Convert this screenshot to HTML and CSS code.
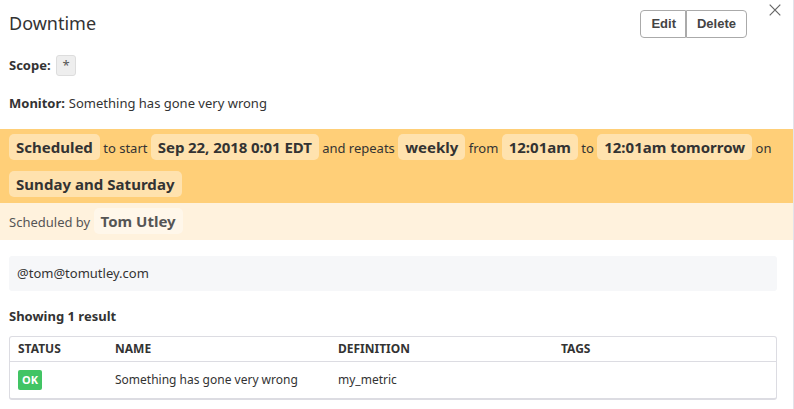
FILE: index.html
```html
<!DOCTYPE html>
<html lang="en">
<head>
<meta charset="utf-8">
<title>Downtime</title>
<link rel="stylesheet" href="styles.css">
</head>
<body>
<main class="panel">
  <header class="header">
    <h1 class="title">Downtime</h1>
    <div class="actions">
      <button class="btn">Edit</button><button class="btn">Delete</button>
    </div>
    <button class="close" aria-label="Close">
      <svg width="12" height="12" viewBox="0 0 12 12"><path d="M.7.7l10.6 10.6M11.3.7L.7 11.3" fill="none" stroke="#666" stroke-width="1.2"/></svg>
    </button>
  </header>
  <p class="scope"><b>Scope:</b> <span class="tag">*</span></p>
  <p class="monitor"><b>Monitor:</b> Something has gone very wrong</p>
  <section class="schedule"><span class="pill">Scheduled</span> to start <span class="pill date">Sep 22, 2018 0:01 EDT</span> and repeats <span class="pill">weekly</span> from <span class="pill">12:01am</span> to <span class="pill">12:01am tomorrow</span> on <span class="pill days">Sunday and Saturday</span></section>
  <section class="author">Scheduled by <span class="pill">Tom Utley</span></section>
  <div class="message">@tom@tomutley.com</div>
  <h2 class="count">Showing 1 result</h2>
  <div class="results">
    <div class="row head"><span>STATUS</span><span>NAME</span><span>DEFINITION</span><span>TAGS</span></div>
    <div class="row"><span><b class="ok">OK</b></span><span>Something has gone very wrong</span><span>my_metric</span><span></span></div>
  </div>
</main>
</body>
</html>
```
FILE: styles.css
```css
* { box-sizing: border-box; }
body {
  margin: 0;
  background: #fff;
  color: #333;
  font: 13px/20px "Noto Sans", sans-serif;
}
.panel {
  width: 794px;
  height: 409px;
  border-right: 1px solid #e3e3ea;
  overflow: hidden;
}
.header {
  display: flex;
  align-items: flex-start;
  height: 55px;
  padding-left: 9px;
}
.title {
  flex: 1;
  margin: 11px 0 0;
  font-size: 18px;
  font-weight: 400;
  line-height: 24px;
}
.actions { display: flex; margin-top: 10px; }
.btn {
  height: 28px;
  padding: 0 10px;
  border: 1px solid #aaa;
  border-radius: 4px 0 0 4px;
  background: #fff;
  color: #444;
  font: bold 13px/24px "Liberation Sans", sans-serif;
}
.btn:first-child { padding-right: 9px; }
.btn + .btn { border-radius: 0 4px 4px 0; }
.close {
  display: flex;
  margin: 4px 12px 0 22px;
  padding: 0;
  border: 0;
  background: none;
}
.scope, .monitor { margin: 0; padding-left: 9px; }
.scope { display: flex; gap: 5px; height: 38px; }
.tag {
  width: 20px;
  height: 21px;
  padding-left: 1px;
  border: 1px solid #ddd;
  border-radius: 3px;
  background: #eee;
  color: #555;
  font-size: 13px;
  line-height: 19px;
  text-align: center;
}
.monitor { height: 36px; }
.monitor b { margin-right: .5px; }
.schedule, .author { padding: 1px 9px 0; line-height: 37px; }
.schedule { height: 74px; background: #ffcf78; }
.author { height: 37px; background: #fff2dd; color: #555; }
.pill {
  display: inline-block;
  height: 26px;
  padding: 0 7px;
  border-radius: 5px;
  background: rgba(255, 255, 255, .4);
  font-size: 15px;
  font-weight: 700;
  line-height: 26px;
}
.date { letter-spacing: -.08px; }
.days { letter-spacing: .04px; }
.message {
  height: 35px;
  margin: 16px 16px 0 9px;
  padding: 0 8px;
  border-radius: 3px;
  background: #f6f7f9;
  line-height: 35px;
}
.count { margin: 15px 0 10px 9px; font-size: 13px; line-height: 20px; }
.results {
  height: 64px;
  margin: 0 16px 0 9px;
  border: 1px solid #dcdce2;
  border-bottom-width: 2px;
  border-radius: 3px;
  font-size: 12px;
}
.row {
  display: grid;
  grid-template-columns: 97px 223px 223px 1fr;
  align-items: center;
  height: 36px;
  padding-left: 8px;
}
.head { height: 25px; border-bottom: 1px solid #dcdce2; font-weight: 700; }
.ok {
  display: block;
  width: 24px;
  height: 20px;
  border-radius: 2px;
  background: #41c464;
  color: #fff;
  font-size: 11px;
  line-height: 20px;
  text-align: center;
}
```
